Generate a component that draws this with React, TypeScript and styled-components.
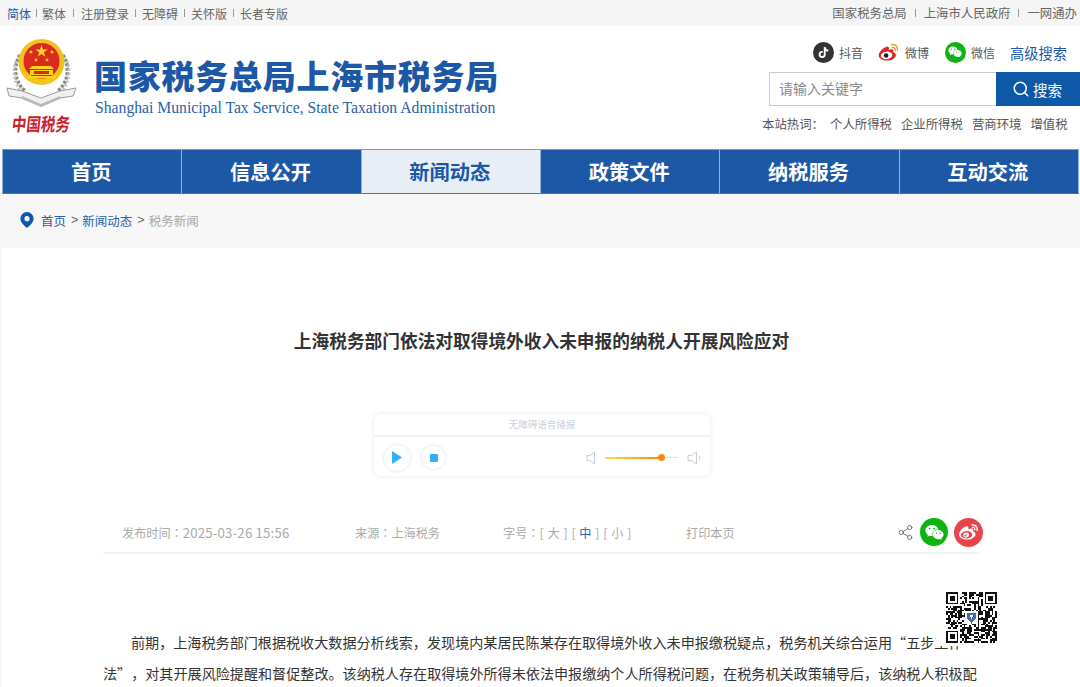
import React from "react";
import styled, { createGlobalStyle } from "styled-components";
import { Search, Share2 } from "lucide-react";
import { FaTiktok, FaWeibo, FaWeixin } from "react-icons/fa";

const CJK = `"Noto Sans CJK SC", "Liberation Sans", sans-serif`;

const GlobalStyle = createGlobalStyle`
  html, body {
    margin: 0;
    padding: 0;
    height: 687px;
    overflow: hidden;
    background: #f7f7f7;
    font-family: ${CJK};
  }
`;

const Page = styled.div`
  width: 1080px;
  height: 687px;
  overflow: hidden;
  display: flex;
  flex-direction: column;
`;

/* top bar */
const TopBar = styled.div`
  height: 26px;
  flex: none;
  background: #f5f5f5;
  display: flex;
  justify-content: space-between;
  align-items: center;
  padding: 0 0 0 7px;
  font-size: 12px;
  color: #666;
  overflow: hidden;
  white-space: nowrap;
`;

const TopGroup = styled.div`
  display: flex;
  align-items: center;
`;

const TopGroupRight = styled(TopGroup)`
  font-size: 12.4px;
  padding-right: 3px;
`;

const TopLink = styled.span<{ $active?: boolean }>`
  color: ${(p) => (p.$active ? "#1c5ba8" : "#666")};
`;

const TopSep = styled.i<{ $w: number }>`
  width: 1px;
  height: 8px;
  background: #999;
  margin: 0 ${(p) => p.$w}px;
`;

/* header */
const Header = styled.div`
  height: 123px;
  flex: none;
  background: #fff;
  display: flex;
  justify-content: space-between;
`;

const Brand = styled.div`
  display: flex;
  padding: 13px 0 0 6px;
`;

const Emblem = styled.div`
  width: 70px;
  display: flex;
  flex-direction: column;
  align-items: center;
`;

const EmblemText = styled.div`
  color: #c8202c;
  font-size: 14.5px;
  line-height: 24px;
  font-weight: 700;
  white-space: nowrap;
  transform: scaleY(1.25) skewX(-8deg);
`;

const BrandText = styled.div`
  margin-left: 19px;
  padding-top: 16px;
`;

const BrandTitle = styled.div`
  color: #1d58a6;
  font-size: 33px;
  line-height: 40px;
  font-weight: 900;
  letter-spacing: 0.75px;
  white-space: nowrap;
  margin-left: -1px;
`;

const BrandSub = styled.div`
  color: #2a62a9;
  font-family: "Liberation Serif", serif;
  font-size: 15.7px;
  line-height: 20px;
  margin-top: 3px;
  white-space: nowrap;
`;

const HeaderRight = styled.div`
  width: 318px;
  display: flex;
  flex-direction: column;
  align-items: flex-end;
  padding-top: 15px;
`;

const SocialRow = styled.div`
  display: flex;
  align-items: center;
  height: 22px;
  padding-right: 13px;
`;

const Social = styled.div<{ $gap: number }>`
  display: flex;
  align-items: center;
  gap: 5px;
  margin-right: ${(p) => p.$gap}px;
  font-size: 12px;
  color: #555;
`;

const SocialIcon = styled.span<{ $bg: string; $size?: number }>`
  width: ${(p) => p.$size ?? 21}px;
  height: ${(p) => p.$size ?? 21}px;
  border-radius: 50%;
  background: ${(p) => p.$bg};
  color: #fff;
  display: flex;
  align-items: center;
  justify-content: center;
  flex: none;
`;

const AdvLink = styled.span`
  color: #1d58a6;
  font-size: 14.25px;
`;

const SearchRow = styled.div`
  display: flex;
  width: 311px;
  height: 34px;
  margin-top: 9px;
`;

const SearchInput = styled.div`
  width: 227px;
  box-sizing: border-box;
  border: 1px solid #ccc;
  border-right: none;
  padding-left: 9px;
  font-size: 14px;
  line-height: 31px;
  color: #8a8a8a;
`;

const SearchButton = styled.div`
  flex: 1;
  background: #0e58a8;
  color: #fff;
  font-size: 14.5px;
  display: flex;
  align-items: center;
  gap: 3px;
  padding-left: 16px;
`;

const HotRow = styled.div`
  width: 318px;
  display: flex;
  margin-top: 9px;
  font-size: 12.4px;
  line-height: 18px;
  color: #555;
  white-space: nowrap;
`;

const HotLabel = styled.span`
  width: 68px;
`;

const HotWord = styled.span`
  margin-right: 9px;
`;

/* nav */
const Nav = styled.div`
  height: 45px;
  flex: none;
  display: flex;
  padding: 0 1px 0 2px;
  background: #f7f7f7;
`;

const NavItem = styled.div<{ $active?: boolean }>`
  flex: 1;
  box-sizing: border-box;
  padding-right: 2px;
  background: ${(p) => (p.$active ? "#e8eef6" : "#1d58a6")};
  color: ${(p) => (p.$active ? "#1d58a6" : "#fff")};
  border-top: 1px solid #6f9ccf;
  border-left: 1px solid #8fb2da;
  border-bottom: 1px solid #3f75b8;
  font-size: 20.25px;
  font-weight: 700;
  display: flex;
  align-items: center;
  justify-content: center;
  &:last-child {
    border-right: 1px solid #8fb2da;
  }
`;

/* breadcrumb */
const Crumbs = styled.div`
  height: 54px;
  flex: none;
  box-sizing: border-box;
  padding: 0 0 2px 20px;
  display: flex;
  align-items: center;
  font-size: 12.5px;
  color: #666;
`;

const CrumbLink = styled.span<{ $muted?: boolean }>`
  color: ${(p) => (p.$muted ? "#a8a8a8" : "#2a62a9")};
`;

const CrumbArrow = styled.span`
  margin: 0 4px 0 5px;
  font-family: "Liberation Sans", sans-serif;
`;

const PinWrap = styled.span`
  display: flex;
  margin-right: 7px;
`;

/* article */
const Article = styled.div`
  flex: 1;
  margin-left: 2px;
  background: #fff;
  position: relative;
  padding: 0 100px 0 101px;
  box-sizing: border-box;
  min-height: 0;
`;

const Title = styled.h1`
  margin: 0;
  padding-top: 78px;
  font-size: 17.7px;
  line-height: 28px;
  font-weight: 700;
  color: #333;
  text-align: center;
  white-space: nowrap;
`;

const Player = styled.div`
  width: 338px;
  height: 64px;
  margin: 59px 0 0 270px;
  box-sizing: border-box;
  border: 1px solid #f3f5f7;
  border-radius: 8px;
  box-shadow: 0 0 4px rgba(200, 210, 220, 0.35);
`;

const PlayerHead = styled.div`
  height: 21px;
  border-bottom: 2px solid #edf2f5;
  font-size: 9.5px;
  line-height: 20px;
  text-align: center;
  color: #ccd0da;
`;

const PlayerBody = styled.div`
  display: flex;
  align-items: center;
  height: 41px;
  padding-left: 9px;
`;

const RoundBtn = styled.div<{ $size: number }>`
  width: ${(p) => p.$size}px;
  height: ${(p) => p.$size}px;
  box-sizing: border-box;
  border: 1px solid #eef1f4;
  border-radius: 50%;
  box-shadow: 0 0 3px rgba(200, 210, 220, 0.4);
  display: flex;
  align-items: center;
  justify-content: center;
  margin-right: 10px;
  flex: none;
`;

const Volume = styled.div`
  display: flex;
  align-items: center;
  margin-left: auto;
  padding-right: 8px;
`;

const Track = styled.div`
  position: relative;
  width: 73px;
  height: 1px;
  margin: 0 9px;
  background: #dfe3e8;
`;

const TrackFill = styled.div`
  height: 2px;
  background: linear-gradient(to right, #ffd94a, #f7890f);
`;

const Knob = styled.span`
  position: absolute;
  top: -3px;
  width: 7px;
  height: 7px;
  margin-left: -3px;
  border-radius: 50%;
  background: #f7890f;
`;

const Meta = styled.div`
  display: flex;
  align-items: center;
  height: 40px;
  margin-top: 35px;
  padding: 0 0 0 19px;
  border-bottom: 2px solid #f4f4f4;
  font-family: "Noto Sans CJK TC", "Liberation Sans", sans-serif;
  font-size: 12.15px;
  color: #aaa;
  white-space: nowrap;
`;

const MetaItem = styled.span<{ $w: number }>`
  width: ${(p) => p.$w}px;
  flex: none;
`;

const MetaDate = styled.span`
  font-size: 13.2px;
  letter-spacing: 0.2px;
`;

const MetaSizes = styled(MetaItem)`
  word-spacing: 1.15px;
`;

const FontSize = styled.b`
  color: #2a62a9;
  font-weight: 400;
`;

const ShareRow = styled.div`
  margin: 0 -3px 0 auto;
  display: flex;
  align-items: center;
  gap: 6px;
  color: #666;
`;

const Body = styled.p`
  margin: 73px 0 0;
  font-size: 14.1px;
  line-height: 31px;
  color: #333;
  text-indent: 28px;
  text-spacing-trim: space-all;
`;

const QrBox = styled.div`
  position: absolute;
  left: 934px;
  top: 334px;
  padding: 10px 10px 3px;
  background: #fff;
  line-height: 0;
`;

const EmblemArt = () => (
  <svg width="70" height="72" viewBox="0 0 70 72">
    <g fill="none" stroke="#8a8a8a" strokeWidth="3.500" strokeDasharray="3 1.500">
      <path d="M14 16C7 28 8 42 19 52" />
      <path d="M57 16C64 28 63 42 52 52" />
    </g>
    <g fill="none" stroke="#c4c4c4" strokeWidth="3" strokeDasharray="2 2">
      <path d="M10 22C6 32 8 44 15 52" />
      <path d="M61 22C65 32 63 44 56 52" />
    </g>
    <path d="M1 49l15 3 19 7 19-7 16-3-3 8-13 2-19 8-19-8-13-2z" fill="#f0f0f0" stroke="#9a9a9a" strokeWidth="1" />
    <path d="M16 57l19 8 19-8 0 3-19 8-19-8z" fill="#b8b8b8" />
    <circle cx="35.500" cy="23" r="23" fill="#f3c21b" />
    <circle cx="35.500" cy="22" r="18" fill="#dc2a20" />
    <path d="M35.500 6l1.500 4.500h4.700l-3.800 2.800 1.400 4.500-3.800-2.700-3.800 2.700 1.400-4.500-3.800-2.800h4.700z" fill="#f7d21e" />
    <g fill="#f7d21e">
      <circle cx="25" cy="13" r="1.500" />
      <circle cx="46" cy="13" r="1.500" />
      <circle cx="30" cy="21" r="1.400" />
      <circle cx="41" cy="21" r="1.400" />
    </g>
    <path d="M26 27h19l3 3H23z" fill="#f7d21e" />
    <rect x="24" y="31" width="23" height="5" fill="#f7d21e" />
    <rect x="28" y="32" width="15" height="3" fill="#dc2a20" />
    <rect x="21" y="37" width="29" height="2.500" fill="#f7d21e" />
  </svg>
);

const Pin = () => (
  <svg width="14" height="16" viewBox="0 0 14 16">
    <path
      fillRule="evenodd"
      fill="#0e58a8"
      d="M7 0a6.600 6.600 0 0 1 6.600 6.600C13.600 10.600 9.500 14 7 16 4.500 14 .4 10.600.4 6.600A6.600 6.600 0 0 1 7 0zm0 4.100a2.600 2.600 0 1 0 0 5.200 2.600 2.600 0 0 0 0-5.200z"
    />
  </svg>
);

const WeiboColor = () => (
  <svg width="23" height="20" viewBox="0 0 23 20">
    <path
      d="M9.500 4.200C5 5.800.8 10 .8 13.300c0 3.300 4.200 5.700 8.700 5.700 5.200 0 9.200-3 9.200-5.700 0-1.900-1.700-2.800-2.900-3.100.5-1.300.3-2.600-1-3-1-.3-2.400 0-3.500.5.300-1.200.3-2.200-.3-2.800-.3-.4-.9-.5-1.500-.7z"
      fill="#e0242c"
    />
    <ellipse cx="9" cy="13.500" rx="6" ry="3.900" fill="#fff" transform="rotate(-8 9 13.500)" />
    <circle cx="8.500" cy="13.700" r="2.400" fill="#222" />
    <path d="M14.500 2.400c3.700-.9 6.700 2.300 5.800 5.900M15 5.300c1.900-.4 3.300 1.100 2.900 2.900" fill="none" stroke="#f39a1f" strokeWidth="1.500" strokeLinecap="round" />
  </svg>
);

const SpeakerLow = () => (
  <svg width="10" height="14" viewBox="0 0 10 14" fill="none" stroke="#c9ced4" strokeWidth="1">
    <path d="M8.500 1L4 4.500H1v5h3L8.500 13z" />
  </svg>
);

const SpeakerHigh = () => (
  <svg width="15" height="14" viewBox="0 0 15 14" fill="none" stroke="#c9ced4" strokeWidth="1">
    <path d="M9.500 1L4.500 4.500H1v5h3.500L9.500 13z" />
    <path d="M12 4.500c1.200 1.500 1.200 3.500 0 5" />
  </svg>
);

// finder patterns plus a seeded scatter of modules
const QR_SIZE = 29;
const isFinder = (x: number, y: number) =>
  (x < 8 && y < 8) || (x > QR_SIZE - 9 && y < 8) || (x < 8 && y > QR_SIZE - 9);

const QrCode = () => {
  const cells: React.ReactNode[] = [];
  let seed = 37;
  for (let y = 0; y < QR_SIZE; y++) {
    for (let x = 0; x < QR_SIZE; x++) {
      seed = (seed * 1103515245 + 12345) & 0x7fffffff;
      const center = x > 10 && x < 18 && y > 10 && y < 18;
      if (!isFinder(x, y) && !center && (seed >> 16) % 100 < 55) {
        cells.push(<rect key={`${x}-${y}`} x={x} y={y} width="1" height="1" />);
      }
    }
  }
  const finder = (x: number, y: number) => (
    <g key={`f${x}${y}`}>
      <rect x={x} y={y} width="7" height="7" />
      <rect x={x + 1} y={y + 1} width="5" height="5" fill="#fff" />
      <rect x={x + 2} y={y + 2} width="3" height="3" />
    </g>
  );
  return (
    <svg width="51" height="51" viewBox="0 0 29 29" fill="#111" shapeRendering="crispEdges">
      {cells}
      {finder(0, 0)}
      {finder(22, 0)}
      {finder(0, 22)}
      <path d="M12 12h5v3l-2.500 3-2.500-3z" fill="#3f6fb0" />
      <path d="M13.500 13l1 2.500 1-2.500" fill="#fff" />
    </svg>
  );
};

const navItems = ["首页", "信息公开", "新闻动态", "政策文件", "纳税服务", "互动交流"];

export default function App() {
  return (
    <Page>
      <GlobalStyle />
      <TopBar>
        <TopGroup>
          <TopLink $active>简体</TopLink>
          <TopSep $w={5} />
          <TopLink>繁体</TopLink>
          <TopSep $w={7} />
          <TopLink>注册登录</TopLink>
          <TopSep $w={6} />
          <TopLink>无障碍</TopLink>
          <TopSep $w={6} />
          <TopLink>关怀版</TopLink>
          <TopSep $w={6} />
          <TopLink>长者专版</TopLink>
        </TopGroup>
        <TopGroupRight>
          <TopLink>国家税务总局</TopLink>
          <TopSep $w={8} />
          <TopLink>上海市人民政府</TopLink>
          <TopSep $w={8} />
          <TopLink>一网通办</TopLink>
        </TopGroupRight>
      </TopBar>

      <Header>
        <Brand>
          <Emblem>
            <EmblemArt />
            <EmblemText>中国税务</EmblemText>
          </Emblem>
          <BrandText>
            <BrandTitle>国家税务总局上海市税务局</BrandTitle>
            <BrandSub>Shanghai Municipal Tax Service, State Taxation Administration</BrandSub>
          </BrandText>
        </Brand>
        <HeaderRight>
          <SocialRow>
            <Social $gap={15}>
              <SocialIcon $bg="#333">
                <FaTiktok size={11} />
              </SocialIcon>
              抖音
            </Social>
            <Social $gap={16}>
              <SocialIcon $bg="transparent" $size={22}>
                <WeiboColor />
              </SocialIcon>
              微博
            </Social>
            <Social $gap={15}>
              <SocialIcon $bg="#0fb30f">
                <FaWeixin size={14} />
              </SocialIcon>
              微信
            </Social>
            <AdvLink>高级搜索</AdvLink>
          </SocialRow>
          <SearchRow>
            <SearchInput>请输入关键字</SearchInput>
            <SearchButton>
              <Search size={18} strokeWidth={2} />
              搜索
            </SearchButton>
          </SearchRow>
          <HotRow>
            <HotLabel>本站热词：</HotLabel>
            <HotWord>个人所得税</HotWord>
            <HotWord>企业所得税</HotWord>
            <HotWord>营商环境</HotWord>
            <HotWord>增值税</HotWord>
          </HotRow>
        </HeaderRight>
      </Header>

      <Nav>
        {navItems.map((item) => (
          <NavItem key={item} $active={item === "新闻动态"}>
            {item}
          </NavItem>
        ))}
      </Nav>

      <Crumbs>
        <PinWrap>
          <Pin />
        </PinWrap>
        <CrumbLink>首页</CrumbLink>
        <CrumbArrow>&gt;</CrumbArrow>
        <CrumbLink>新闻动态</CrumbLink>
        <CrumbArrow>&gt;</CrumbArrow>
        <CrumbLink $muted>税务新闻</CrumbLink>
      </Crumbs>

      <Article>
        <Title>上海税务部门依法对取得境外收入未申报的纳税人开展风险应对</Title>
        <Player>
          <PlayerHead>无障碍语音播报</PlayerHead>
          <PlayerBody>
            <RoundBtn $size={28}>
              <svg width="12" height="13" viewBox="0 0 12 13">
                <path d="M1 0l10 6.500L1 13z" fill="#2fb0fb" />
              </svg>
            </RoundBtn>
            <RoundBtn $size={25}>
              <svg width="8" height="8" viewBox="0 0 8 8">
                <rect width="8" height="8" rx="1" fill="#2fb0fb" />
              </svg>
            </RoundBtn>
            <Volume>
              <SpeakerLow />
              <Track>
                <TrackFill style={{ width: "77%" }} />
                <Knob style={{ left: "77%" }} />
              </Track>
              <SpeakerHigh />
            </Volume>
          </PlayerBody>
        </Player>
        <Meta>
          <MetaItem $w={233}>
            发布时间：<MetaDate>2025-03-26 15:56</MetaDate>
          </MetaItem>
          <MetaItem $w={148}>来源：上海税务</MetaItem>
          <MetaSizes $w={183}>
            字号：[ 大 ] [ <FontSize>中</FontSize> ] [ 小 ]
          </MetaSizes>
          <MetaItem $w={60}>打印本页</MetaItem>
          <ShareRow>
            <Share2 size={17} strokeWidth={1.2} />
            <SocialIcon $bg="#0fb30f" $size={28}>
              <FaWeixin size={19} />
            </SocialIcon>
            <SocialIcon $bg="#e8454a" $size={29}>
              <FaWeibo size={19} />
            </SocialIcon>
          </ShareRow>
        </Meta>
        <Body>
          前期，上海税务部门根据税收大数据分析线索，发现境内某居民陈某存在取得境外收入未申报缴税疑点，税务机关综合运用“五步工作法”，对其开展风险提醒和督促整改。该纳税人存在取得境外所得未依法申报缴纳个人所得税问题，在税务机关政策辅导后，该纳税人积极配合
        </Body>
        <QrBox>
          <QrCode />
        </QrBox>
      </Article>
    </Page>
  );
}
